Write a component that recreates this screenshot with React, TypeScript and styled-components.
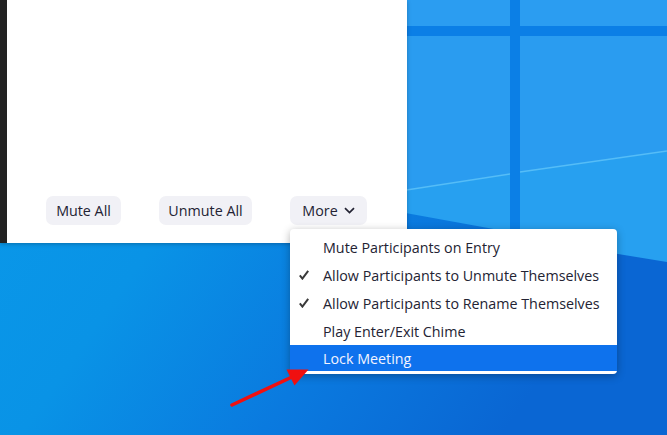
import React from "react";
import styled, { createGlobalStyle } from "styled-components";

const GlobalStyle = createGlobalStyle`
  html, body { margin: 0; padding: 0; }
  body {
    width: 667px;
    height: 435px;
    overflow: hidden;
    font-family: "Open Sans", "Noto Sans", sans-serif;
  }
`;

const Desktop = styled.div`
  position: relative;
  width: 667px;
  height: 435px;
  overflow: hidden;
  background: #0a8ee6;
`;

const Wallpaper = styled.svg`
  position: absolute;
  inset: 0;
  z-index: 0;
`;

const Window = styled.div`
  position: relative;
  z-index: 1;
  display: flex;
  width: 407px;
  height: 243px;
  box-shadow: 0 1px 4px rgba(0, 0, 0, 0.25);
`;

const Sidebar = styled.div`
  width: 7px;
  background: #222222;
`;

const Panel = styled.div`
  flex: 1;
  background: #ffffff;
  display: flex;
  flex-direction: column;
  justify-content: flex-end;
  padding-bottom: 18px;
`;

const ButtonRow = styled.div`
  display: flex;
  align-items: center;
  gap: 38px;
  padding-left: 39px;
`;

const Button = styled.button<{ $w: number }>`
  width: ${(p) => p.$w}px;
  height: 29px;
  padding: 0;
  border: none;
  border-radius: 7px;
  background: #f1f1f6;
  color: #232333;
  font-family: "Open Sans", "Noto Sans", sans-serif;
  font-size: 14.3px;
  display: flex;
  align-items: center;
  justify-content: center;
  gap: 6px;
  cursor: default;
`;

const MoreWrap = styled.div`
  position: relative;
`;

const Menu = styled.ul`
  position: absolute;
  top: calc(100% + 4px);
  left: 0;
  width: 327px;
  margin: 0;
  padding: 4px 0 3px;
  list-style: none;
  background: #ffffff;
  border-radius: 4px;
  box-shadow: 0 2px 8px rgba(0, 0, 0, 0.3);
  z-index: 3;
`;

const Item = styled.li<{ $active?: boolean }>`
  display: flex;
  align-items: center;
  height: ${(p) => (p.$active ? 26 : 28)}px;
  padding-left: 9px;
  background: ${(p) => (p.$active ? "#0e72ed" : "transparent")};
  color: ${(p) => (p.$active ? "#f4f4ff" : "#232333")};
  font-size: 14.3px;
  white-space: nowrap;
`;

const CheckSlot = styled.span`
  width: 24px;
  display: flex;
  align-items: center;
`;

const Arrow = styled.svg`
  position: absolute;
  left: 0;
  top: 0;
  z-index: 4;
  pointer-events: none;
`;

const Check = () => (
  <svg width="10" height="10" viewBox="0 0 10 10">
    <path d="M0.8 5.4 L3.4 8.6 L9.2 0.9" fill="none" stroke="#3a3a3a" strokeWidth="2" strokeLinejoin="miter" />
  </svg>
);

const Chevron = () => (
  <svg width="11" height="7" viewBox="0 0 11 7">
    <path d="M1 1.2 L5.5 5.6 L10 1.2" fill="none" stroke="#232333" strokeWidth="1.7" />
  </svg>
);

const items = [
  { label: "Mute Participants on Entry", checked: false },
  { label: "Allow Participants to Unmute Themselves", checked: true },
  { label: "Allow Participants to Rename Themselves", checked: true },
  { label: "Play Enter/Exit Chime", checked: false },
  { label: "Lock Meeting", checked: false, active: true },
];

export default function App() {
  return (
    <Desktop>
      <GlobalStyle />
      <Wallpaper width="667" height="435" viewBox="0 0 667 435">
        <defs>
          <linearGradient id="base" x1="0" y1="0" x2="1" y2="0.45">
            <stop offset="0" stopColor="#0a9aea" />
            <stop offset="0.4" stopColor="#0993e6" />
            <stop offset="0.7" stopColor="#0a7adf" />
            <stop offset="1" stopColor="#0a66d3" />
          </linearGradient>
        </defs>
        <rect x="0" y="0" width="667" height="435" fill="url(#base)" />
        <rect x="400" y="0" width="110" height="26" fill="#2b9df1" />
        <rect x="520" y="0" width="147" height="26" fill="#2b9df1" />
        <polygon points="400,36 510,36 510,174 400,191" fill="#2a9cf0" />
        <polygon points="520,36 667,36 667,151 520,172" fill="#2a9cf0" />
        <polygon points="400,191 510,174 510,232 400,212" fill="#27a0f0" />
        <polygon points="520,172 667,151 667,262 520,238" fill="#27a0f0" />
        <line x1="400" y1="191" x2="510" y2="174" stroke="#55bdf7" strokeWidth="1.5" />
        <line x1="520" y1="172" x2="667" y2="151" stroke="#55bdf7" strokeWidth="1.5" />
        <rect x="400" y="26" width="267" height="10" fill="#0b7fe6" />
        <rect x="510" y="0" width="10" height="240" fill="#0b7fe6" />
      </Wallpaper>
      <Window>
        <Sidebar />
        <Panel>
          <ButtonRow>
            <Button $w={75}>Mute All</Button>
            <Button $w={93}>Unmute All</Button>
            <MoreWrap>
              <Button $w={77}>
                More <Chevron />
              </Button>
              <Menu>
                {items.map((it) => (
                  <Item key={it.label} $active={it.active}>
                    <CheckSlot>{it.checked ? <Check /> : null}</CheckSlot>
                    {it.label}
                  </Item>
                ))}
              </Menu>
            </MoreWrap>
          </ButtonRow>
        </Panel>
      </Window>
      <Arrow width="667" height="435" viewBox="0 0 667 435">
        <line x1="232" y1="405" x2="292" y2="377" stroke="#f01010" strokeWidth="3.5" strokeLinecap="round" />
        <polygon points="286.5,369.5 308.5,369.5 294.5,385.5" fill="#f01010" />
      </Arrow>
    </Desktop>
  );
}
